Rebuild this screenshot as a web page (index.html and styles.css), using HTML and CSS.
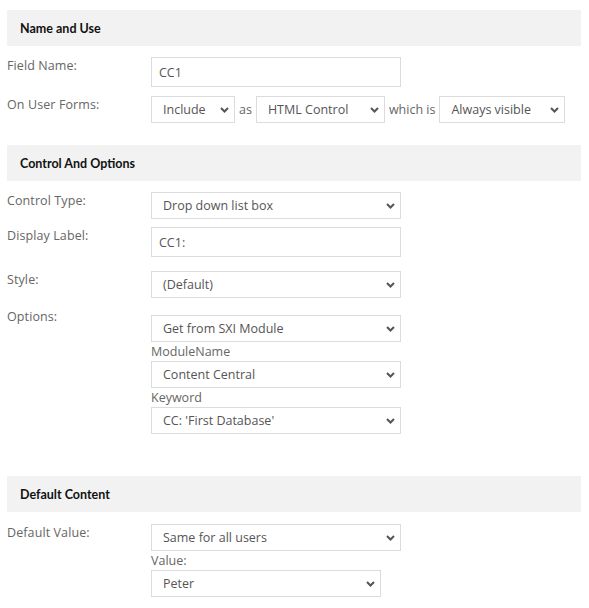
FILE: index.html
```html
<!DOCTYPE html>
<html>
<head>
<meta charset="utf-8">
<link rel="stylesheet" href="styles.css">
</head>
<body>
<div class="page">
  <div class="band">Name and Use</div>
  <div class="row r-field">
    <div class="label">Field Name:</div>
    <div class="ctrl"><input class="txt" type="text" value="CC1"></div>
  </div>
  <div class="row r-forms">
    <div class="label">On User Forms:</div>
    <div class="ctrl inline">
      <div class="sel w-include"><select><option>Include</option></select><svg class="chev" viewBox="0 0 9 6"><polyline points="1,1 4.5,4.5 8,1"/></svg></div>
      <span class="word">as</span>
      <div class="sel w-html"><select><option>HTML Control</option></select><svg class="chev" viewBox="0 0 9 6"><polyline points="1,1 4.5,4.5 8,1"/></svg></div>
      <span class="word">which is</span>
      <div class="sel w-vis"><select><option>Always visible</option></select><svg class="chev" viewBox="0 0 9 6"><polyline points="1,1 4.5,4.5 8,1"/></svg></div>
    </div>
  </div>

  <div class="band b2">Control And Options</div>
  <div class="row r-ctype">
    <div class="label">Control Type:</div>
    <div class="ctrl"><div class="sel w-full"><select><option>Drop down list box</option></select><svg class="chev" viewBox="0 0 9 6"><polyline points="1,1 4.5,4.5 8,1"/></svg></div></div>
  </div>
  <div class="row r-dlabel">
    <div class="label">Display Label:</div>
    <div class="ctrl"><input class="txt" type="text" value="CC1:"></div>
  </div>
  <div class="row r-style">
    <div class="label">Style:</div>
    <div class="ctrl"><div class="sel w-full"><select><option>(Default)</option></select><svg class="chev" viewBox="0 0 9 6"><polyline points="1,1 4.5,4.5 8,1"/></svg></div></div>
  </div>
  <div class="row r-options">
    <div class="label">Options:</div>
    <div class="ctrl stack">
      <div class="sel w-full"><select><option>Get from SXI Module</option></select><svg class="chev" viewBox="0 0 9 6"><polyline points="1,1 4.5,4.5 8,1"/></svg></div>
      <div class="sub">ModuleName</div>
      <div class="sel w-full"><select><option>Content Central</option></select><svg class="chev" viewBox="0 0 9 6"><polyline points="1,1 4.5,4.5 8,1"/></svg></div>
      <div class="sub">Keyword</div>
      <div class="sel w-full"><select><option>CC: 'First Database'</option></select><svg class="chev" viewBox="0 0 9 6"><polyline points="1,1 4.5,4.5 8,1"/></svg></div>
    </div>
  </div>

  <div class="band b3">Default Content</div>
  <div class="row r-default">
    <div class="label">Default Value:</div>
    <div class="ctrl stack">
      <div class="sel w-full"><select><option>Same for all users</option></select><svg class="chev" viewBox="0 0 9 6"><polyline points="1,1 4.5,4.5 8,1"/></svg></div>
      <div class="sub">Value:</div>
      <div class="sel w-peter"><select><option>Peter</option></select><svg class="chev" viewBox="0 0 9 6"><polyline points="1,1 4.5,4.5 8,1"/></svg></div>
    </div>
  </div>
</div>
</body>
</html>
```

FILE: styles.css
```css
* { box-sizing: border-box; }
html, body { margin: 0; padding: 0; background: #fff; }
body {
  font-family: "Open Sans", "DejaVu Sans", sans-serif;
  font-size: 12.5px;
  color: #666;
}
.page {
  padding: 10px 8px 0 7px;
}
.band {
  height: 36px;
  background: #f2f2f2;
  color: #111;
  font-family: "Lato", "Open Sans", sans-serif;
  font-weight: 700;
  font-size: 12.5px;
  display: flex;
  align-items: center;
  padding-left: 13px;
}
.b2 { margin-top: 22px; }
.b3 { margin-top: 42px; }

.row { display: flex; align-items: flex-start; }
.label {
  width: 144px;
  flex: none;
  line-height: 18px;
  color: #666;
  letter-spacing: 0.1px;
}
.ctrl { display: flex; }
.ctrl.inline { align-items: center; gap: 4px; }
.ctrl.stack { flex-direction: column; }
.word { color: #666; }

.r-field { margin-top: 11px; }
.r-forms { margin-top: 9px; }
.r-ctype { margin-top: 11px; }
.r-dlabel { margin-top: 8px; }
.r-style { margin-top: 14px; }
.r-options { margin-top: 10px; }
.r-options .ctrl { padding-top: 7px; }
.r-default { margin-top: 12px; }

.txt {
  width: 250px;
  height: 30px;
  border: 1px solid #dcdcdc;
  padding: 0 7px;
  font: inherit;
  color: #555;
  background: #fff;
  outline: none;
}
.sel {
  position: relative;
  height: 27px;
}
.sel select {
  appearance: none;
  -webkit-appearance: none;
  width: 100%;
  height: 27px;
  border: 1px solid #dcdcdc;
  border-radius: 0;
  background: #fff;
  font: inherit;
  color: #555;
  padding: 0 0 0 11px;
  outline: none;
}
.chev {
  position: absolute;
  right: 6px;
  top: 11px;
  width: 9px;
  height: 6px;
  fill: none;
  stroke: #555;
  stroke-width: 2;
  pointer-events: none;
}
.w-full { width: 250px; }
.w-include { width: 84px; }
.w-html { width: 129px; }
.w-vis { width: 126px; }
.w-peter { width: 230px; }
.sub {
  line-height: 19px;
  color: #666;
}
```
